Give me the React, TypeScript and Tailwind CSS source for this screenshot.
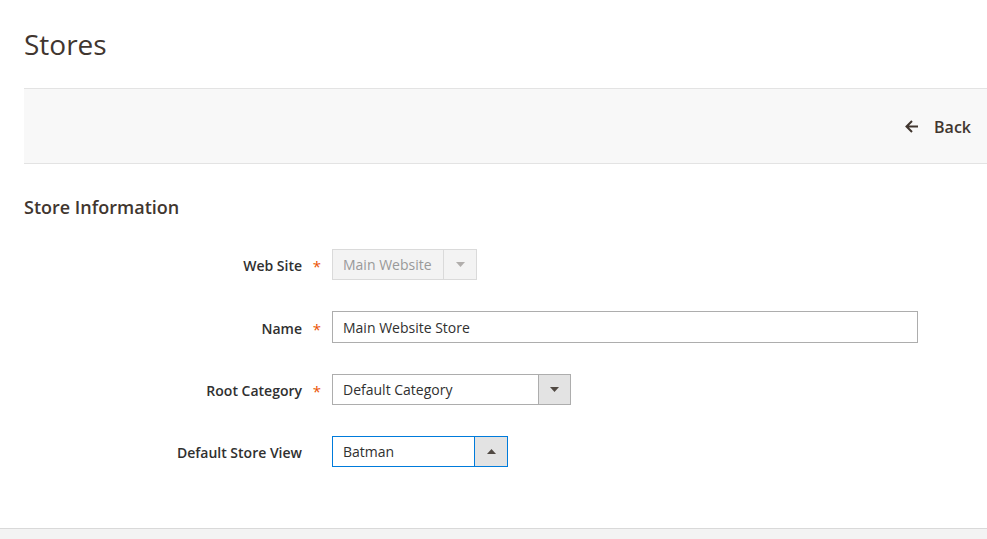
import React from "react";

function Arrow({ up = false, muted = false }: { up?: boolean; muted?: boolean }) {
  return (
    <svg width="9" height="5" viewBox="0 0 9 5" className={muted ? "opacity-40" : ""}>
      {up ? <path d="M0 5 L4.5 0 L9 5 Z" fill="#514943" /> : <path d="M0 0 L9 0 L4.5 5 Z" fill="#514943" />}
    </svg>
  );
}

function Row({ label, required, h, children, last }: { label: string; required?: boolean; h: string; children: React.ReactNode; last?: boolean }) {
  return (
    <div className={`flex items-center ${h} ${last ? "" : "mb-[31px]"}`}>
      <div className="w-[278px] text-right text-[14px] font-semibold text-[#303030] pt-[2px]">{label}</div>
      <div className="w-[30px] flex justify-center text-[#eb5202] text-[15px] leading-none pt-[4px]">{required ? "*" : ""}</div>
      {children}
    </div>
  );
}

export default function App() {
  return (
    <div className="w-[987px] h-[539px] bg-white overflow-hidden flex flex-col" style={{ fontFamily: '"Open Sans", sans-serif' }}>
      <div className="h-[88px] pl-[24px] pt-[25px]">
        <h1 className="text-[28px] leading-[38px] text-[#41362f] font-normal">Stores</h1>
      </div>
      <div className="ml-[24px] h-[76px] bg-[#f8f8f8] border-y border-[#e3e3e3] flex items-center justify-end pr-[16px]">
        <div className="flex items-center gap-[15px] text-[#41362f] pt-[1px]">
          <svg width="14" height="13" viewBox="0 0 14 13" fill="none">
            <path d="M13 6.5H2M7 1L1.5 6.5L7 12" stroke="#41362f" strokeWidth="2" />
          </svg>
          <span className="text-[16px] font-semibold leading-none">Back</span>
        </div>
      </div>
      <div className="pl-[24px] mt-[31px] mb-[29px] h-[25px]">
        <h2 className="text-[18px] font-semibold leading-[25px] text-[#41362f]">Store Information</h2>
      </div>
      <div className="pl-[24px]">
        <Row label="Web Site" required h="h-[31px]">
          <div className="h-[31px] w-[145px] flex border border-[#dadada] bg-[#f3f3f3] text-[14px]">
            <div className="flex-1 flex items-center pl-[10px] text-[#999999]">Main Website</div>
            <div className="w-[33px] border-l border-[#dadada] flex items-center justify-center">
              <Arrow muted />
            </div>
          </div>
        </Row>
        <Row label="Name" required h="h-[32px]">
          <div className="h-[32px] w-[586px] border border-[#adadad] bg-white flex items-center pl-[10px] text-[14px] text-[#303030]">
            Main Website Store
          </div>
        </Row>
        <Row label="Root Category" required h="h-[31px]">
          <div className="h-[31px] w-[239px] flex border border-[#adadad] bg-white text-[14px]">
            <div className="flex-1 flex items-center pl-[10px] text-[#303030]">Default Category</div>
            <div className="w-[32px] border-l border-[#adadad] bg-[#e3e3e3] flex items-center justify-center">
              <Arrow />
            </div>
          </div>
        </Row>
        <Row label="Default Store View" h="h-[31px]" last>
          <div className="h-[31px] w-[176px] flex border border-[#007bdb] bg-white text-[14px]">
            <div className="flex-1 flex items-center pl-[10px] text-[#303030]">Batman</div>
            <div className="w-[33px] border-l border-[#007bdb] bg-[#e3e3e3] flex items-center justify-center">
              <Arrow up />
            </div>
          </div>
        </Row>
      </div>
      <div className="flex-1" />
      <div className="h-[11px] border-t border-[#d9d9d9] bg-[#f3f3f3]" />
    </div>
  );
}
